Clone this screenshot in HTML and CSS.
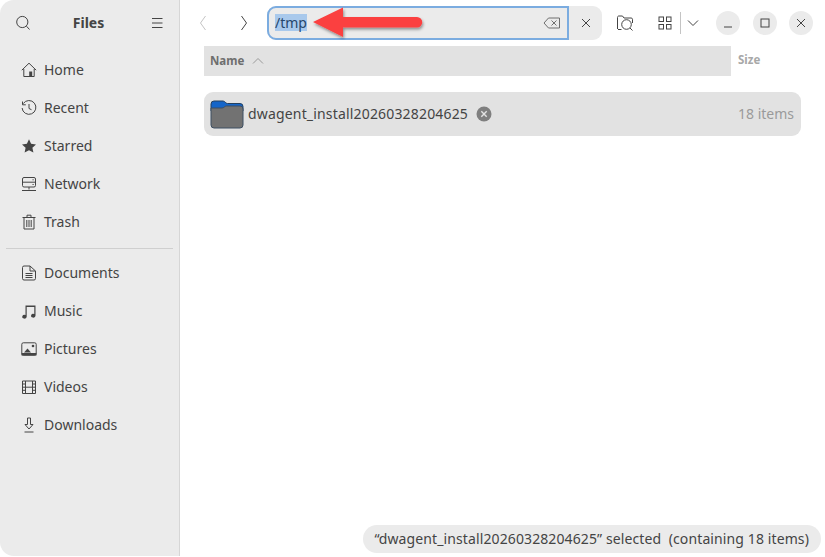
FILE: index.html
```html
<!DOCTYPE html>
<html lang="en">
<head>
<meta charset="UTF-8">
<title>Files</title>
<link rel="stylesheet" href="styles.css">
</head>
<body>
<div class="window">
    <aside class="sidebar">
        <div class="side-head">
            <svg class="icon" viewBox="0 0 16 16"><circle cx="7.3" cy="7" r="5.6"/><path d="M11.5 11.2l3 3.3"/></svg>
            <span class="side-title">Files</span>
            <svg class="icon" viewBox="0 0 16 16"><path d="M3 3.5h10.5M3 8h10.5M3 12.5h10.5"/></svg>
        </div>
        <ul class="places">
            <li><svg class="icon" viewBox="0 0 16 16"><path d="M.8 8.2L8 1.2l7.2 7M2.8 7v7.5h10.4V7"/><path class="fill" d="M8.2 9.5h3v5h-3z"/></svg><span>Home</span></li>
            <li><svg class="icon" viewBox="0 0 16 16"><path d="M2.3 3.5A6.9 6.9 0 1 1 1.1 8M1.5 1.5v3.3h3.3M8 4v4.5l2.5 1.2"/></svg><span>Recent</span></li>
            <li><svg class="icon" viewBox="0 0 16 16"><path class="fill" d="M8 1.2l2.1 4.6 4.9.6-3.6 3.3 1 4.9L8 12.2l-4.400 2.400 1-4.900L1 6.400l4.900-.6z"/></svg><span>Starred</span></li>
            <li><svg class="icon" viewBox="0 0 16 16"><rect x="1.500" y="1.500" width="13" height="9.500" rx="1.500"/><path d="M1.500 6.200h13M8 11v2.500M1 14.500h14M11.500 3.800h1.200M11.500 8.500h1.200"/></svg><span>Network</span></li>
            <li><svg class="icon" viewBox="0 0 16 16"><path d="M1.500 3.500h13M3 3.500v11.500h10V3.500M6 3.500V1.200h4v2.300M5.800 6v7M8 6v7M10.200 6v7"/></svg><span>Trash</span></li>
        </ul>
        <hr class="side-sep">
        <ul class="places">
            <li><svg class="icon" viewBox="0 0 16 16"><path d="M2 2.500a1.500 1.500 0 0 1 1.500-1.500h6L15 6v7.500a1.500 1.500 0 0 1-1.500 1.500h-10A1.500 1.500 0 0 1 2 13.500zM9.500 1v5H15M5 8.500h7M5 10.500h7M5 12.500h7" transform="translate(-.5)"/></svg><span>Documents</span></li>
            <li><svg class="icon" viewBox="0 0 16 16"><path class="fill" d="M4.500 2.500h10v10.300a2.200 1.900 0 1 1-1.200-1.800V4H5.700v9.800a2.200 1.900 0 1 1-1.200-1.800z"/></svg><span>Music</span></li>
            <li><svg class="icon" viewBox="0 0 16 16"><rect x=".8" y="1.800" width="14.400" height="12.400" rx="1.500"/><path class="fill" d="M3 11.500l3.500-4 3.500 4zM.5 12h15v2.500H.5z"/><circle class="fill" cx="12" cy="5" r="1.300"/></svg><span>Pictures</span></li>
            <li><svg class="icon" viewBox="0 0 16 16"><path d="M1.500 2h13v12.500h-13zM4.500 2v12.500M11.500 2v12.500M4.500 8.200h7M1.500 5h3M1.500 8.200h3M1.500 11.300h3M11.500 5h3M11.500 8.200h3M11.500 11.300h3"/></svg><span>Videos</span></li>
            <li><svg class="icon" viewBox="0 0 16 16"><path d="M6.500 1h3v6.500h2.500L8 12 4 7.500h2.500zM3.500 15h9"/></svg><span>Downloads</span></li>
        </ul>
    </aside>

    <main class="content">
        <header class="toolbar">
            <div class="nav-arrows">
                <svg class="icon dim" viewBox="0 0 16 16"><path d="M9.500 1L4.500 8l5 7"/></svg>
                <svg class="icon" viewBox="0 0 16 16"><path d="M5.500 1l5 7-5 7"/></svg>
            </div>
            <div class="path-group">
                <div class="path-entry">
                    <span class="path-text">/tmp</span>
                    <svg class="icon soft" viewBox="0 0 18 16"><path d="M5.500 3h11v10h-11L1 8zM8.500 5.500l5 5M13.500 5.500l-5 5"/></svg>
                </div>
                <div class="path-cancel">
                    <svg class="icon small" viewBox="0 0 12 12"><path d="M2 2l8 8M10 2l-8 8"/></svg>
                </div>
            </div>
            <div class="tools">
                <svg class="icon find" viewBox="0 0 18 18"><path d="M2 15.500h3.500M1.500 15V3.500c0-.8.5-1.500 1.300-1.500h3.700l1.500 2h7.200c.7 0 1.300.6 1.300 1.300V9"/><circle cx="10.500" cy="10.500" r="4.800"/><path d="M14 14l2.500 2.500"/></svg>
                <div class="view-switch">
                    <svg class="icon grid" viewBox="0 0 14 14"><rect x="1" y="1" width="4.500" height="4.500"/><rect x="8.500" y="1" width="4.500" height="4.500"/><rect x="1" y="8.500" width="4.500" height="4.500"/><rect x="8.500" y="8.500" width="4.500" height="4.500"/></svg>
                    <span class="view-sep"></span>
                    <svg class="icon small chevron" viewBox="0 0 12 12"><path d="M1 3.500l5 5 5-5"/></svg>
                </div>
            </div>
            <div class="win-controls">
                <div class="win-btn"><svg class="icon small" viewBox="0 0 12 12"><path d="M2 10h8"/></svg></div>
                <div class="win-btn"><svg class="icon small" viewBox="0 0 12 12"><rect x="2" y="2" width="8" height="8"/></svg></div>
                <div class="win-btn"><svg class="icon small" viewBox="0 0 12 12"><path d="M2 2l8 8M10 2l-8 8"/></svg></div>
            </div>
        </header>

        <div class="columns">
            <div class="col-name">
                <span>Name</span>
                <svg class="icon small sort" viewBox="0 0 12 12"><path d="M1 8.500l5-5 5 5"/></svg>
            </div>
            <div class="col-size">Size</div>
        </div>

        <div class="row">
            <svg class="folder" viewBox="0 0 34 30">
                <path d="M1 5a3 3 0 0 1 3-3h9c2 0 2.500 2.500 4.500 2.500H30a3 3 0 0 1 3 3V12H1z" fill="#1565c8" stroke="#24405f"/>
                <path d="M1 9h11c2 0 2.500-2 4.500-2H30a3 3 0 0 1 3 3v16a3 3 0 0 1-3 3H4a3 3 0 0 1-3-3z" fill="#727272" stroke="#3d4f63"/>
            </svg>
            <span class="row-name">dwagent_install20260328204625</span>
            <svg class="badge" viewBox="0 0 16 16"><circle cx="8" cy="8" r="7.500" fill="#7f7f7f"/><path d="M5.300 5.300l5.400 5.400M10.700 5.300l-5.400 5.400" stroke="#e2e2e2" stroke-width="1.400"/></svg>
            <span class="row-size">18 items</span>
        </div>

        <div class="status">“dwagent_install20260328204625” selected&nbsp; (containing 18 items)</div>
    </main>

    <svg class="arrow" viewBox="0 0 120 40">
        <defs><filter id="shadow"><feDropShadow dx="1" dy="2" stdDeviation="1.500" flood-color="#000" flood-opacity=".4"/></filter></defs>
        <path filter="url(#shadow)" fill="#fb4040" d="M1 17L31 2.500V12H105a5.250 5.250 0 0 1 0 10.500H31V32z"/>
    </svg>
</div>
</body>
</html>
```

FILE: styles.css
```css
* {
    box-sizing: border-box;
}

html, body {
    margin: 0;
    height: 100%;
    background: #fff;
}

body {
    font-family: "Noto Sans", sans-serif;
    font-size: 14px;
    color: #444;
}

.window {
    position: relative;
    display: flex;
    width: 825px;
    height: 557px;
    overflow: hidden;
}

.icon {
    width: 16px;
    height: 16px;
    flex: none;
    fill: none;
    stroke: #444;
    stroke-width: 1;
}

.icon .fill {
    fill: #444;
    stroke: none;
}

.icon.small {
    width: 12px;
    height: 12px;
}

.icon.dim {
    stroke: #c4c4c4;
}

/* sidebar */
.sidebar {
    width: 180px;
    height: 556px;
    flex: none;
    background: #ebebeb;
    border-right: 1px solid #d6d6d6;
    border-radius: 14px 0 0 14px;
    padding: 0 6px;
}

.side-head {
    display: flex;
    align-items: center;
    justify-content: space-between;
    height: 46px;
    padding: 0 8px 0 9px;
}

.side-title {
    font-weight: 700;
    font-size: 14px;
    padding: 0 3px 2px 0;
}

.places {
    list-style: none;
    margin: 0;
    padding: 0;
}

.places li {
    display: flex;
    align-items: center;
    gap: 7px;
    height: 38px;
    padding-left: 15px;
}

.places li span {
    padding-bottom: 1px;
}

.side-head + .places {
    padding-top: 5px;
}

.side-sep {
    margin: 7px 0 5px;
    border: 0;
    border-top: 1px solid #cfcfcf;
}

/* main column */
.content {
    flex: 1;
    min-width: 0;
    display: flex;
    flex-direction: column;
    position: relative;
    padding-left: 24px;
}

.toolbar {
    display: flex;
    align-items: center;
    height: 46px;
}

.nav-arrows {
    display: flex;
    gap: 24px;
    width: 71px;
    margin-left: -8px;
}

.path-group {
    display: flex;
    align-items: center;
    width: 335px;
    height: 34px;
    margin-right: 14px;
    background: #ebebeb;
    border-radius: 9px;
}

.path-entry {
    display: flex;
    align-items: center;
    justify-content: space-between;
    width: 302px;
    height: 34px;
    padding: 0 6px;
    border: 2px solid #7bace0;
    border-radius: 9px 0 0 9px;
}

.path-text {
    background: #a9c9ec;
    color: #26476b;
    line-height: 17px;
    margin-bottom: 1px;
}

.icon.soft {
    width: 18px;
    stroke: #6f6f6f;
}

.path-cancel {
    flex: 1;
    display: flex;
    justify-content: center;
}

.tools {
    display: flex;
    align-items: center;
    gap: 24px;
}

.icon.find {
    width: 18px;
    height: 18px;
}

.view-switch {
    display: flex;
    align-items: center;
    gap: 6px;
}

.icon.grid {
    width: 14px;
    height: 14px;
    margin-right: 2px;
}

.view-sep {
    width: 1px;
    height: 22px;
    background: #c4c4c4;
}

.win-controls {
    display: flex;
    gap: 12.5px;
    margin-left: 17px;
}

.win-btn {
    display: flex;
    align-items: center;
    justify-content: center;
    width: 24px;
    height: 24px;
    border-radius: 50%;
    background: #ebebeb;
}

.columns {
    display: flex;
    height: 30px;
    font-size: 11.5px;
    font-weight: 700;
}

.col-name {
    display: flex;
    align-items: center;
    gap: 8px;
    width: 527px;
    padding-left: 6px;
    background: #e2e2e2;
    color: #6e6e6e;
}

.col-name span {
    padding-bottom: 2px;
}

.icon.sort {
    stroke: #9a9a9a;
}

.col-size {
    padding-left: 7px;
    line-height: 28px;
    color: #a8a8a8;
}

.row {
    display: flex;
    align-items: center;
    width: 597px;
    height: 44px;
    margin-top: 16px;
    padding: 0 7px 0 6px;
    background: #e2e2e2;
    border-radius: 9px;
}

.folder {
    width: 34px;
    height: 30px;
    flex: none;
}

.row-name {
    margin-left: 4px;
    padding-bottom: 2px;
    letter-spacing: .17px;
}

.badge {
    width: 16px;
    height: 16px;
    margin-left: 8px;
}

.row-size {
    margin-left: auto;
    padding-bottom: 2px;
    color: #9a9a9a;
}

.status {
    position: absolute;
    right: 4px;
    bottom: 4px;
    height: 28px;
    line-height: 27px;
    padding: 0 12px 0 11px;
    border-radius: 14px;
    background: #ebebeb;
    white-space: nowrap;
    letter-spacing: .11px;
}

/* red annotation arrow drawn over the path bar */
.arrow {
    position: absolute;
    left: 312px;
    top: 5px;
    width: 120px;
    height: 40px;
    overflow: visible;
}
```
